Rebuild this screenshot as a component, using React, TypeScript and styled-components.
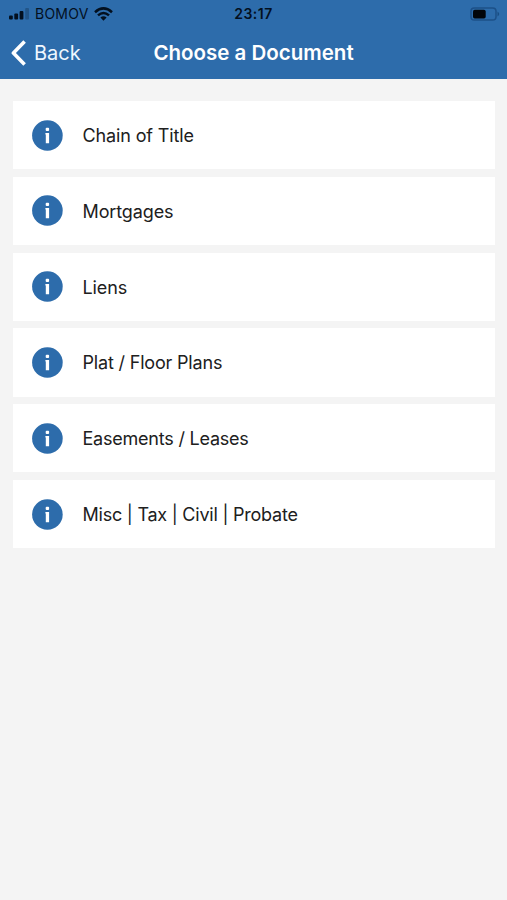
import React from "react";
import styled, { createGlobalStyle } from "styled-components";

const BLUE = "#2d6cab";

const GlobalStyle = createGlobalStyle`
  * { box-sizing: border-box; }
  body { margin: 0; background: #f4f4f4; font-family: Inter, "Liberation Sans", sans-serif; }
`;

const Screen = styled.div`
  height: 900px;
  overflow: hidden;
  background: #f4f4f4;
`;

const Header = styled.header`
  height: 79px;
  background: ${BLUE};
`;

const StatusBar = styled.div`
  display: grid;
  grid-template-columns: 1fr auto 1fr;
  align-items: center;
  height: 27px;
  padding: 0 7px 0 9px;
  color: #03101f;
`;

const Carrier = styled.div`
  display: flex;
  align-items: center;
  font-size: 14px;
  line-height: 16px;
  letter-spacing: 0.25px;

  span { margin: 1px 5px 0 5px; }
`;

const Clock = styled.div`
  margin: 1px 2px 0 0;
  font-size: 14px;
  line-height: 16px;
  font-weight: 600;
  letter-spacing: 0.5px;
`;

const Battery = styled.svg`
  justify-self: end;
`;

const NavBar = styled.nav`
  display: grid;
  grid-template-columns: 1fr auto 1fr;
  align-items: center;
  height: 51px;
  padding: 0 11px;
  color: #fff;
`;

const BackButton = styled.button`
  display: flex;
  align-items: center;
  gap: 8px;
  padding: 0;
  border: 0;
  background: none;
  color: #eef7ff;
  font: 400 20px/24px Inter, sans-serif;
`;

const Title = styled.h1`
  margin: 0;
  font-size: 20.5px;
  line-height: 24px;
  font-weight: 600;
  letter-spacing: 0;
  white-space: nowrap;
`;

const List = styled.ul`
  display: flex;
  flex-direction: column;
  gap: 7.6px;
  margin: 0;
  padding: 22px 12px 0 13px;
  list-style: none;
`;

const Row = styled.li`
  display: flex;
  align-items: center;
  gap: 19.5px;
  height: 68.2px;
  padding-left: 19px;
  background: #fff;
`;

const Label = styled.span<{ $tracking?: number }>`
  padding-top: 2px;
  font-size: 18px;
  line-height: 24px;
  color: #202020;
  letter-spacing: ${({ $tracking = 0 }) => $tracking}px;
  white-space: nowrap;
`;

const DOCUMENTS = [
  { name: "Chain of Title", tracking: -0.13 },
  { name: "Mortgages", tracking: -0.12 },
  { name: "Liens", tracking: -0.12 },
  { name: "Plat / Floor Plans", tracking: -0.18 },
  { name: "Easements / Leases", tracking: -0.22 },
  { name: "Misc | Tax | Civil | Probate", tracking: -0.23 },
];

const InfoIcon = () => (
  <svg width="31" height="31" viewBox="0 0 31 31">
    <circle cx="15.4" cy="15.5" r="15.3" fill={BLUE} />
    <rect x="13.7" y="7.8" width="3.4" height="3.1" rx="0.9" fill="#fff" />
    <path d="M13.4 13h3.7v10.2h-3.3v-8.6h-.4z" fill="#fff" />
  </svg>
);

export default function App() {
  return (
    <Screen>
      <GlobalStyle />
      <Header>
        <StatusBar>
          <Carrier>
            <svg width="21" height="12" viewBox="0 0 21 12" fill="currentColor">
              <rect x="0" y="7.5" width="3.8" height="4" rx="1" />
              <rect x="5.3" y="5.6" width="3.8" height="5.9" rx="1" />
              <rect x="10.6" y="3" width="3.8" height="8.5" rx="1" />
              <rect x="16.2" y="0" width="3.8" height="11.5" rx="1" opacity="0.25" />
            </svg>
            <span>BOMOV</span>
            <svg width="19" height="14" viewBox="0 0 19 14" fill="none" stroke="currentColor" strokeWidth="2.5">
              <path d="M1 5.2Q9.5-2.4 18 5.2" />
              <path d="M4 8.4Q9.5 3.5 15 8.4" />
              <path d="M9.5 13.7L6.4 10.6Q9.5 8 12.6 10.6Z" fill="currentColor" stroke="none" />
            </svg>
          </Carrier>
          <Clock>23:17</Clock>
          <Battery width="30" height="14" viewBox="0 0 30 14">
            <rect x="1" y="1" width="25" height="12" rx="3.3" fill="none" stroke="#1c5088" strokeWidth="1.5" />
            <rect x="3" y="2.7" width="12.7" height="8.8" rx="1.7" fill="#020509" />
            <path d="M27.5 4.5Q31 7 27.5 9.5Z" fill="#194e83" />
          </Battery>
        </StatusBar>
        <NavBar>
          <BackButton>
            <svg width="15" height="26" viewBox="0 0 15 26" fill="none" stroke="#fff" strokeWidth="3.6" strokeLinejoin="round">
              <path d="M13.6 1.6L2.4 13L13.6 24.4" />
            </svg>
            Back
          </BackButton>
          <Title>Choose a Document</Title>
        </NavBar>
      </Header>
      <List>
        {DOCUMENTS.map(({ name, tracking }) => (
          <Row key={name}>
            <InfoIcon />
            <Label $tracking={tracking}>{name}</Label>
          </Row>
        ))}
      </List>
    </Screen>
  );
}
